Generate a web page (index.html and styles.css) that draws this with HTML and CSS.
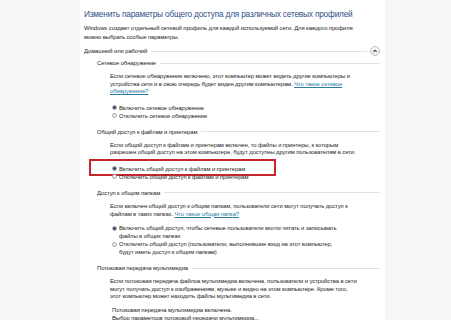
FILE: index.html
```html
<!DOCTYPE html>
<html lang="ru">
<head>
<meta charset="utf-8">
<link rel="stylesheet" href="styles.css">
</head>
<body>
<div class="panel">
  <h1 class="title">Изменить параметры общего доступа для различных сетевых профилей</h1>
  <p class="desc">Windows создает отдельный сетевой профиль для каждой используемой сети. Для каждого профиля<br>можно выбрать особые параметры.</p>

  <div class="profile-head">
    <span class="profile-name">Домашний или рабочий</span>
    <span class="rule"></span>
    <span class="collapse">
      <svg viewBox="0 0 10 10" width="8" height="8"><path d="M3 6 L5 4 L7 6" fill="none" stroke="#333" stroke-width="1.3"/></svg>
    </span>
  </div>

  <section class="group first">
    <div class="group-head"><span>Сетевое обнаружение</span><span class="rule"></span></div>
    <p class="text">Если сетевое обнаружение включено, этот компьютер может видеть другие компьютеры и<br>устройства сети и в свою очередь будет виден другим компьютерам. <a class="link">Что такое сетевое<br>обнаружение?</a></p>
    <div class="options">
      <label class="opt"><span class="radio on"></span><span>Включить сетевое обнаружение</span></label>
      <label class="opt"><span class="radio"></span><span>Отключить сетевое обнаружение</span></label>
    </div>
  </section>

  <section class="group">
    <div class="group-head"><span>Общий доступ к файлам и принтерам</span><span class="rule"></span></div>
    <p class="text">Если общий доступ к файлам и принтерам включен, то файлы и принтеры, к которым<br>разрешен общий доступ на этом компьютере, будут доступны другим пользователям в сети.</p>
    <div class="options">
      <label class="opt marked"><span class="radio on"></span><span>Включить общий доступ к файлам и принтерам</span></label>
      <label class="opt"><span class="radio"></span><span>Отключить общий доступ к файлам и принтерам</span></label>
    </div>
  </section>

  <section class="group">
    <div class="group-head"><span>Доступ к общим папкам</span><span class="rule"></span></div>
    <p class="text">Если включен общий доступ к общим папкам, пользователи сети могут получать доступ к<br>файлам в таких папках. <a class="link">Что такое общая папка?</a></p>
    <div class="options tight">
      <label class="opt"><span class="radio on"></span><span>Включить общий доступ, чтобы сетевые пользователи могли читать и записывать<br>файлы в общих папках</span></label>
      <label class="opt"><span class="radio"></span><span>Отключить общий доступ (пользователи, выполнившие вход на этот компьютер,<br>будут иметь доступ к общим папкам)</span></label>
    </div>
  </section>

  <section class="group">
    <div class="group-head"><span>Потоковая передача мультимедиа</span><span class="rule"></span></div>
    <p class="text">Если потоковая передача файлов мультимедиа включена, пользователи и устройства в сети<br>могут получать доступ к изображениям, музыке и видео на этом компьютере. Кроме того,<br>этот компьютер может находить файлы мультимедиа в сети.</p>
    <div class="options plain">
      <p>Потоковая передача мультимедиа включена.</p>
      <p>Выбор параметров потоковой передачи мультимедиа...</p>
    </div>
  </section>
</div>
</body>
</html>
```
FILE: styles.css
```css
* { box-sizing: border-box; }
html, body { margin: 0; padding: 0; }
body {
  background: #f7f7f7;
  font-family: "Liberation Sans", Arial, sans-serif;
  color: #1c1c1c;
  overflow: hidden;
  height: 320px;
}
.panel {
  margin-left: 80px;
  width: 305px;
  height: 320px;
  background: #ffffff;
  padding: 8px 0 0 4px;
  white-space: nowrap;
  font-size: 5.9px;
  letter-spacing: -0.1px;
}
.title {
  margin: 0;
  font-size: 8.3px;
  letter-spacing: -0.2px;
  line-height: 12px;
  font-weight: normal;
  color: #2f4f8a;
}
.desc {
  margin: 4px 0 0;
  line-height: 9px;
}
.profile-head {
  display: flex;
  align-items: center;
  height: 10px;
  margin-top: 4px;
  width: 296px;
}
.profile-name { margin-right: 4px; }
.rule {
  flex: 1;
  height: 1px;
  background: #dde3e8;
}
.collapse {
  width: 10px;
  height: 10px;
  margin-left: 3px;
  border-radius: 50%;
  border: 1px solid #c4c4c4;
  background: radial-gradient(circle at 50% 35%, #fdfdfd, #e3e3e3);
  display: flex;
  align-items: center;
  justify-content: center;
}
.group {
  padding-left: 13px;
}
.group-head {
  display: flex;
  align-items: center;
  gap: 4px;
  height: 10px;
  margin-top: 7px;
  width: 283px;
}
.group.first .group-head { margin-top: 2px; }
.text {
  margin: 5px 0 0 13px;
  line-height: 7.6px;
}
.link {
  color: #2a7ba8;
  text-decoration: underline;
}
.options {
  margin: 8px 0 0 15px;
  line-height: 8px;
}
.options.tight { margin-top: 6px; }
.options.plain { margin-top: 5px; }
.opt {
  display: flex;
  align-items: flex-start;
  gap: 2px;
  position: relative;
}
.radio {
  flex: none;
  width: 5px;
  height: 5px;
  margin-top: 1.5px;
  border-radius: 50%;
  border: 1px solid #a5a5a5;
  background: #f0f0f0;
}
.radio.on {
  border-color: #8a9aa8;
  background: radial-gradient(circle, #3a4a5c 0 1.3px, #dfe6ec 1.6px);
}
.opt.marked::after {
  content: "";
  position: absolute;
  left: -23px;
  top: -6px;
  width: 183px;
  height: 13px;
  border: 2px solid #c4262e;
}
.plain p { margin: 0; }
```
